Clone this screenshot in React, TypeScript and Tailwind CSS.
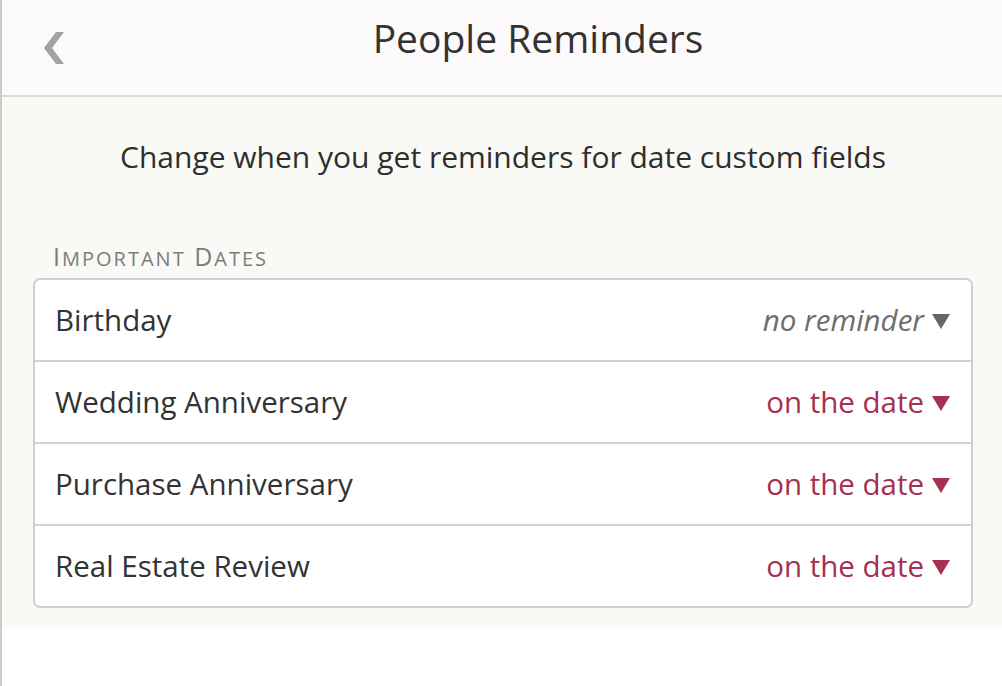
import React from "react";

const rows = [
  { label: "Birthday", value: "no reminder", active: false },
  { label: "Wedding Anniversary", value: "on the date", active: true },
  { label: "Purchase Anniversary", value: "on the date", active: true },
  { label: "Real Estate Review", value: "on the date", active: true },
];

function Caret({ color }: { color: string }) {
  return (
    <svg width="18" height="15" viewBox="0 0 18 15" className="ml-[8px] mt-[2px]">
      <polygon points="0,0 18,0 9,15" fill={color} />
    </svg>
  );
}

export default function App() {
  return (
    <div
      className="w-[1002px] h-[686px] bg-white border-l-2 border-[#cbcbcb] flex flex-col text-[#333]"
      style={{ fontFamily: "'Open Sans', Lato, sans-serif" }}
    >
      <div className="h-[97px] shrink-0 bg-[#fcfafb] border-b-2 border-[#d9d9d9] flex items-center relative">
        <svg width="22" height="32" viewBox="0 0 22 32" className="absolute left-[40px] top-[32px]">
          <polygon points="14,0 22,0 10,16 22,32 14,32 2,16" fill="#a3a3a3" />
        </svg>
        <div className="w-full text-center text-[39px] text-[#333] leading-none pb-[20px] pl-[72px]">
          People Reminders
        </div>
      </div>
      <div className="bg-[#f9f9f6] pt-[45px] pb-[20px] pl-[31px] pr-[29px]">
        <div className="text-center text-[30px] leading-none text-[#2e2e2e]">
          Change when you get reminders for date custom fields
        </div>
        <div className="mt-[72px] pl-[20px] text-[25px] leading-none text-[#7c7c7c] tracking-[2px]">
          I<span className="text-[20px]">MPORTANT</span> D<span className="text-[20px]">ATES</span>
        </div>
        <div className="mt-[9px] bg-white border-2 border-[#cfcfcf] rounded-[7px] overflow-hidden">
          {rows.map((r, i) => (
            <div
              key={r.label}
              className={`flex items-center justify-between pl-[20px] pr-[21px] ${
                i > 0 ? "border-t-2 border-[#d3d3d3] h-[82px]" : "h-[80px]"
              }`}
            >
              <span className="text-[29.5px] text-[#333]">{r.label}</span>
              <span
                className={`flex items-center text-[29.5px] ${
                  r.active ? "text-[#a5304f]" : "text-[#6e6e6e] italic"
                }`}
              >
                {r.value}
                <Caret color={r.active ? "#a5304f" : "#666666"} />
              </span>
            </div>
          ))}
        </div>
      </div>
    </div>
  );
}
